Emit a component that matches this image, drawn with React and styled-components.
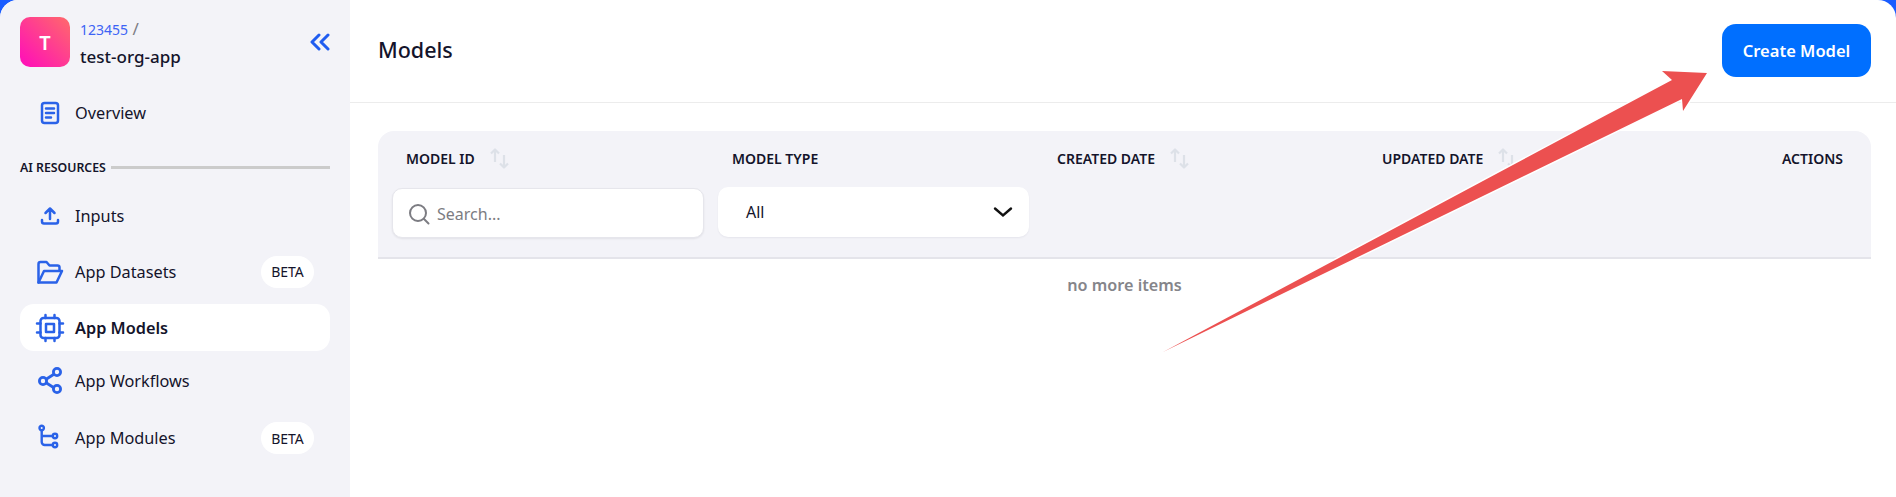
import styled, { createGlobalStyle } from "styled-components";

const GlobalStyle = createGlobalStyle`
	html, body {
		margin: 0;
		padding: 0;
		height: 100%;
		background: #1a5cff;
		font-family: "Noto Sans", "Open Sans", sans-serif;
		color: #14142b;
	}
	* { box-sizing: border-box; }
`;

const Shell = styled.div`
	position: relative;
	display: flex;
	width: 1896px;
	height: 497px;
	overflow: hidden;
	border-radius: 18px 18px 0 0;
	background: #fff;
`;

const Sidebar = styled.aside`
	flex: 0 0 350px;
	background: #f3f3f8;
	padding: 17px 20px 0;
`;

const OrgRow = styled.div`
	display: flex;
	align-items: center;
	height: 50px;
	margin-bottom: 22px;
`;

const Avatar = styled.div`
	display: flex;
	align-items: center;
	justify-content: center;
	width: 50px;
	height: 50px;
	border-radius: 10px;
	background: linear-gradient(45deg, #ff14b4 10%, #ff6a6a 100%);
	color: #fff;
	font-size: 20px;
	font-weight: 600;
`;

const OrgText = styled.div`
	flex: 1;
	margin: 2px 0 0 10px;
`;

const OrgId = styled.div`
	font-size: 17px;
	line-height: 20px;
	color: #7d7d85;
	span { color: #3d63f5; font-size: 14px; }
`;

const OrgName = styled.div`
	margin-top: 6px;
	font-size: 17px;
	line-height: 22px;
	font-weight: 500;
`;

const Collapse = styled.svg`
	width: 20px;
	height: 18px;
	fill: none;
	stroke: #1f5cf0;
	stroke-width: 3;
	stroke-linecap: round;
	stroke-linejoin: round;
`;

const SectionLabel = styled.div`
	display: flex;
	align-items: center;
	gap: 5px;
	height: 18px;
	margin: 22px 0 16px;
	font-size: 12.3px;
	font-weight: 600;
	white-space: nowrap;
	&::after {
		content: "";
		flex: 1;
		height: 3px;
		background: #cbcbcb;
	}
`;

const NavItem = styled.div`
	display: flex;
	align-items: center;
	height: ${({ $h }) => $h || 47}px;
	margin-bottom: ${({ $mb }) => $mb || 0}px;
	padding-right: 16px;
	border-radius: 14px;
	background: ${({ $active }) => ($active ? "#fff" : "transparent")};
	font-size: 16.3px;
	font-weight: ${({ $active }) => ($active ? 600 : 400)};
`;

const NavIcon = styled.svg`
	flex: 0 0 32px;
	width: 32px;
	height: 28px;
	margin: 0 11px 0 12px;
	overflow: visible;
	fill: none;
	stroke: #2a62e8;
	stroke-width: ${({ $stroke }) => $stroke || 2.5};
	stroke-linecap: round;
	stroke-linejoin: round;
`;

const NavLabel = styled.span`
	flex: 1;
`;

const Badge = styled.span`
	display: flex;
	align-items: center;
	justify-content: center;
	width: 53px;
	height: 32px;
	border-radius: 16px;
	background: #fff;
	font-size: 14px;
`;

const Main = styled.main`
	flex: 1;
	min-width: 0;
`;

const TopBar = styled.header`
	display: flex;
	align-items: center;
	justify-content: space-between;
	height: 103px;
	padding: 0 25px 1px 28px;
	border-bottom: 1px solid #ececec;
`;

const Title = styled.h1`
	margin: 0 0 3px;
	font-size: 21.5px;
	font-weight: 500;
`;

const CreateButton = styled.button`
	width: 149px;
	height: 53px;
	border: 0;
	border-radius: 14px;
	background: #006fff;
	color: #fff;
	font: 600 16.5px "Noto Sans", sans-serif;
`;

const TablePanel = styled.section`
	margin: 28px 25px 0 28px;
`;

const TableHead = styled.div`
	display: grid;
	grid-template-columns: 326px 325px 325px 325px 1fr;
	height: 128px;
	padding: 0 0 0 14px;
	border-bottom: 2px solid #e4e4ea;
	border-radius: 16px 16px 0 0;
	background: #f3f3f8;
`;

const HeadCell = styled.div`
	display: flex;
	flex-direction: column;
	padding-top: 15px;
`;

const HeadLabel = styled.div`
	display: flex;
	align-items: center;
	justify-content: ${({ $right }) => ($right ? "flex-end" : "flex-start")};
	gap: 15px;
	height: 24px;
	padding: 0 ${({ $right }) => ($right ? "28px" : "14px")};
	font-size: 14px;
	font-weight: 600;
	white-space: nowrap;
`;

const SortIcon = styled.svg`
	width: 20px;
	height: 21px;
	fill: none;
	stroke: #dde1e8;
	stroke-width: 2.2;
	stroke-linejoin: round;
`;

const SearchBox = styled.div`
	display: flex;
	align-items: center;
	gap: 7px;
	width: 312px;
	height: 50px;
	margin-top: 18px;
	padding: 2px 0 0 15px;
	border: 1px solid #e6e6ec;
	border-radius: 10px;
	background: #fff;
	box-shadow: 0 1px 2px rgba(20, 20, 43, 0.08);
	color: #7c7c82;
	font-size: 16px;
`;

const SearchIcon = styled.svg`
	width: 22px;
	height: 22px;
	fill: none;
	stroke: #7c7c82;
	stroke-width: 2;
	stroke-linecap: round;
`;

const SelectBox = styled.div`
	display: flex;
	align-items: center;
	justify-content: space-between;
	width: 311px;
	height: 50px;
	margin-top: 17px;
	padding: 0 16px 0 28px;
	border-radius: 10px;
	background: #fff;
	box-shadow: 0 1px 2px rgba(20, 20, 43, 0.06);
	font-size: 16px;
`;

const Chevron = styled.svg`
	width: 20px;
	height: 12px;
	fill: none;
	stroke: #111;
	stroke-width: 2.4;
	stroke-linecap: round;
`;

const EmptyNote = styled.div`
	margin-top: 15px;
	text-align: center;
	font-size: 16.2px;
	font-weight: 600;
	line-height: 22px;
	color: #85858a;
`;

const Callout = styled.svg`
	position: absolute;
	left: 0;
	top: 0;
	width: 1896px;
	height: 497px;
	pointer-events: none;
`;

const Sort = () => (
	<SortIcon viewBox="0 0 20 21">
		<path d="M5 14V1.500M1 5.500l4-4 4 4" />
		<path d="M14 7v12.500M10 15.500l4 4 4-4" />
	</SortIcon>
);

export default function App() {
	return (
		<>
			<GlobalStyle />
			<Shell>
				<Sidebar>
					<OrgRow>
						<Avatar>T</Avatar>
						<OrgText>
							<OrgId>
								<span>123455</span> /
							</OrgId>
							<OrgName>test-org-app</OrgName>
						</OrgText>
						<Collapse viewBox="0 0 20 18">
							<path d="M9 2 2 9l7 7M18 2l-7 7 7 7" />
						</Collapse>
					</OrgRow>
					<NavItem>
						<NavIcon viewBox="0 0 32 28">
							<rect x="10" y="4" width="16" height="20" rx="2.500" />
							<path d="M14 9.500h8M14 14h8M14 18.500h5" />
						</NavIcon>
						<NavLabel>Overview</NavLabel>
					</NavItem>
					<SectionLabel>AI RESOURCES</SectionLabel>
					<NavItem $mb={9}>
						<NavIcon viewBox="0 0 32 28">
							<path d="M18 17V7M13.500 11 18 6.500l4.500 4.500M10 18v1.500a2 2 0 0 0 2 2h12a2 2 0 0 0 2-2V18" />
						</NavIcon>
						<NavLabel>Inputs</NavLabel>
					</NavItem>
					<NavItem $mb={9}>
						<NavIcon viewBox="0 0 32 28">
							<path d="M6.500 24.500V6a2 2 0 0 1 2-2h6l3 3.500h8a2 2 0 0 1 2 2v3" />
							<path d="M6.500 24.500h18L30 13H12L6.500 24.500Z" />
						</NavIcon>
						<NavLabel>App Datasets</NavLabel>
						<Badge>BETA</Badge>
					</NavItem>
					<NavItem $active>
						<NavIcon viewBox="0 0 32 28">
							<rect x="8.500" y="4" width="19" height="20" rx="3" />
							<rect x="14" y="10" width="8" height="8" />
							<path d="M13.500 4V1M22.500 4V1M13.500 27v-3M22.500 27v-3M8.500 9.500H5M8.500 18.500H5M27.500 9.500H31M27.500 18.500H31" />
						</NavIcon>
						<NavLabel>App Models</NavLabel>
					</NavItem>
					<NavItem $h={60}>
						<NavIcon viewBox="0 0 32 28" $stroke={2.8}>
							<circle cx="11" cy="14" r="3.600" />
							<circle cx="25" cy="5" r="3.600" />
							<circle cx="25" cy="22" r="3.600" />
							<path d="m14.500 12 7-4.500M14.500 16l7 4.500" />
						</NavIcon>
						<NavLabel>App Workflows</NavLabel>
					</NavItem>
					<NavItem $h={54}>
						<NavIcon viewBox="0 0 32 28" $stroke={2.4}>
							<circle cx="9.700" cy="4" r="2.200" />
							<circle cx="23" cy="12" r="2.200" />
							<circle cx="23" cy="21" r="2.200" />
							<path d="M9.700 6.200V18a3 3 0 0 0 3 3h8M9.700 12h11" />
						</NavIcon>
						<NavLabel>App Modules</NavLabel>
						<Badge>BETA</Badge>
					</NavItem>
				</Sidebar>
				<Main>
					<TopBar>
						<Title>Models</Title>
						<CreateButton>Create Model</CreateButton>
					</TopBar>
					<TablePanel>
						<TableHead>
							<HeadCell>
								<HeadLabel>
									MODEL ID <Sort />
								</HeadLabel>
								<SearchBox>
									<SearchIcon viewBox="0 0 22 22">
										<circle cx="10" cy="10" r="8" />
										<path d="m16 16 4.500 4.500" />
									</SearchIcon>
									Search...
								</SearchBox>
							</HeadCell>
							<HeadCell>
								<HeadLabel>MODEL TYPE</HeadLabel>
								<SelectBox>
									All
									<Chevron viewBox="0 0 20 12">
										<path d="m2 2.500 8 7 8-7" />
									</Chevron>
								</SelectBox>
							</HeadCell>
							<HeadCell>
								<HeadLabel>
									CREATED DATE <Sort />
								</HeadLabel>
							</HeadCell>
							<HeadCell>
								<HeadLabel>
									UPDATED DATE <Sort />
								</HeadLabel>
							</HeadCell>
							<HeadCell>
								<HeadLabel $right>ACTIONS</HeadLabel>
							</HeadCell>
						</TableHead>
						<EmptyNote>no more items</EmptyNote>
					</TablePanel>
				</Main>
				<Callout viewBox="0 0 1896 497">
					<path
						d="M1163 352 1672 80 1662 71 1707 73 1683 111 1682 99Z"
						fill="#ec5050"
						stroke="#fff"
						strokeWidth="3"
						paintOrder="stroke"
					/>
				</Callout>
			</Shell>
		</>
	);
}
